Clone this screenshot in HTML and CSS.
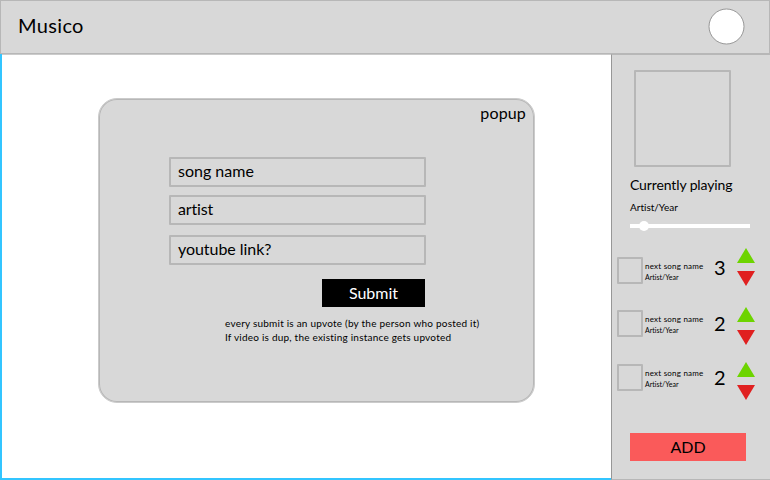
FILE: index.html
```html
<!DOCTYPE html>
<html lang="en">
<head>
<meta charset="utf-8">
<title>Musico</title>
<link rel="stylesheet" href="styles.css">
</head>
<body>
<header class="topbar">
  <h1 class="brand">Musico</h1>
  <svg class="avatar" viewBox="0 0 37 37"><circle cx="18.5" cy="18.5" r="17.5"/></svg>
</header>
<div class="content">
  <main class="stage">
    <form class="popup">
      <span class="popup-title">popup</span>
      <div class="fields">
        <div class="field song">song name</div>
        <div class="field artist">artist</div>
        <div class="field link">youtube link?</div>
        <button class="submit" type="button">Submit</button>
      </div>
      <p class="note">every submit is an upvote (by the person who posted it)<br>If video is dup, the existing instance gets upvoted</p>
    </form>
  </main>
  <aside class="sidebar">
    <div class="cover"></div>
    <h2 class="now">Currently playing</h2>
    <p class="now-artist">Artist/Year</p>
    <svg class="slider" viewBox="0 0 120 10"><rect y="3" width="120" height="4"/><circle cx="14" cy="5" r="5"/></svg>
    <div class="queue">
      <div class="item">
        <div class="thumb"></div>
        <div class="meta"><div class="title">next song name</div><div class="by">Artist/Year</div></div>
        <div class="votes">3</div>
        <svg class="arrows" viewBox="0 0 18 38"><path class="up" d="M9 0L18 15H0z"/><path class="down" d="M0 23H18L9 38z"/></svg>
      </div>
      <div class="item second">
        <div class="thumb"></div>
        <div class="meta"><div class="title">next song name</div><div class="by">Artist/Year</div></div>
        <div class="votes">2</div>
        <svg class="arrows" viewBox="0 0 18 38"><path class="up" d="M9 0L18 15H0z"/><path class="down" d="M0 23H18L9 38z"/></svg>
      </div>
      <div class="item third">
        <div class="thumb"></div>
        <div class="meta"><div class="title">next song name</div><div class="by">Artist/Year</div></div>
        <div class="votes">2</div>
        <svg class="arrows" viewBox="0 0 18 38"><path class="up" d="M9 0L18 15H0z"/><path class="down" d="M0 23H18L9 38z"/></svg>
      </div>
    </div>
    <button class="add" type="button">ADD</button>
  </aside>
</div>
</body>
</html>
```
FILE: styles.css
```css
* { box-sizing: border-box; }
body {
  margin: 0;
  width: 770px;
  height: 480px;
  display: flex;
  flex-direction: column;
  overflow: hidden;
  background: #fff;
  color: #000;
  font-family: Lato, "Liberation Sans", sans-serif;
  font-variant-ligatures: none;
  white-space: nowrap;
}
h1, h2, p { margin: 0; font-weight: 400; }
svg { display: block; }
button { border: 0; padding: 0; font: inherit; }
.topbar {
  height: 54px;
  flex: none;
  display: flex;
  justify-content: space-between;
  align-items: flex-start;
  padding: 7px 24px 0 17px;
  background: #d8d8d8;
  border: 1px solid #b7b7b7;
}
.brand { margin-top: 5px; font-size: 20px; line-height: 24px; letter-spacing: 0.35px; }
.avatar { width: 37px; height: 37px; fill: #fff; stroke: #979797; }
.content { flex: 1; display: flex; }
.stage {
  width: 611px;
  padding: 43px 0 0 96px;
  border: solid #32c5ff;
  border-width: 0 0 2px 2px;
  box-shadow: inset 0 1px #cbcbcb;
}
.popup {
  width: 437px;
  height: 305px;
  margin-top: 1px;
  display: flex;
  flex-direction: column;
  background: #d8d8d8;
  border: 1px solid #cbcbcb;
  border-radius: 19px;
  box-shadow: inset 0 0 0 1px #b7b7b7;
}
.popup-title {
  align-self: flex-end;
  margin: 4px 8px 0 0;
  font-size: 16px;
  line-height: 20px;
  letter-spacing: 0.15px;
}
.fields { width: 257px; margin: 34px 0 0 70px; display: flex; flex-direction: column; }
.field {
  height: 30px;
  border: 2px solid #b7b7b7;
  border-radius: 1px;
  padding-left: 7px;
  font-size: 16px;
  line-height: 24px;
}
.artist { margin-top: 8px; letter-spacing: -0.15px; }
.link { margin-top: 10px; letter-spacing: -0.05px; }
.submit {
  align-self: flex-end;
  width: 103px;
  height: 28px;
  margin: 14px 1px 0 0;
  background: #000;
  color: #fff;
  font-size: 16px;
  line-height: 26px;
}
.note { margin: 9px 0 0 126px; font-size: 10px; line-height: 14px; letter-spacing: 0.22px; }
.sidebar {
  width: 159px;
  background: #d8d8d8;
  border: solid #b7b7b7;
  border-width: 1px 0 1px 1px;
  border-left-color: #979797;
}
.cover { width: 97px; height: 97px; margin: 15px 0 0 22px; border: 2px solid #b7b7b7; border-radius: 1px; }
.now { margin: 8px 0 0 18px; font-size: 14px; line-height: 20px; letter-spacing: -0.12px; }
.now-artist { margin: 5px 0 0 18px; font-size: 10px; line-height: 14px; }
.slider { width: 120px; height: 10px; margin: 7px 0 0 18px; fill: #fff; }
.queue { margin: 17px 0 0 5px; }
.item { height: 38px; display: flex; align-items: flex-start; }
.second { margin-top: 21px; }
.third { margin-top: 17px; }
.thumb { width: 26px; height: 27px; margin-top: 9px; border: 2px solid #b7b7b7; border-radius: 1px; }
.meta { width: 69px; margin: 13px 0 0 2px; }
.title { font-size: 8px; line-height: 11px; letter-spacing: 0.22px; }
.by { font-size: 7px; line-height: 11px; }
.votes { width: 23px; margin-top: 7px; font-size: 20px; line-height: 24px; }
.second .thumb { margin-top: 3px; }
.second .meta { margin-top: 7px; }
.second .votes { margin-top: 4px; }
.third .thumb { margin-top: 2px; }
.third .meta { margin-top: 6px; }
.third .votes { margin-top: 3px; }
.arrows { width: 18px; height: 38px; }
.up { fill: #6dd400; }
.down { fill: #e02020; }
.add {
  display: block;
  width: 116px;
  height: 28px;
  margin: 33px 0 0 18px;
  background: #fa5a5a;
  color: #000;
  font-size: 16px;
  line-height: 26px;
}
```
